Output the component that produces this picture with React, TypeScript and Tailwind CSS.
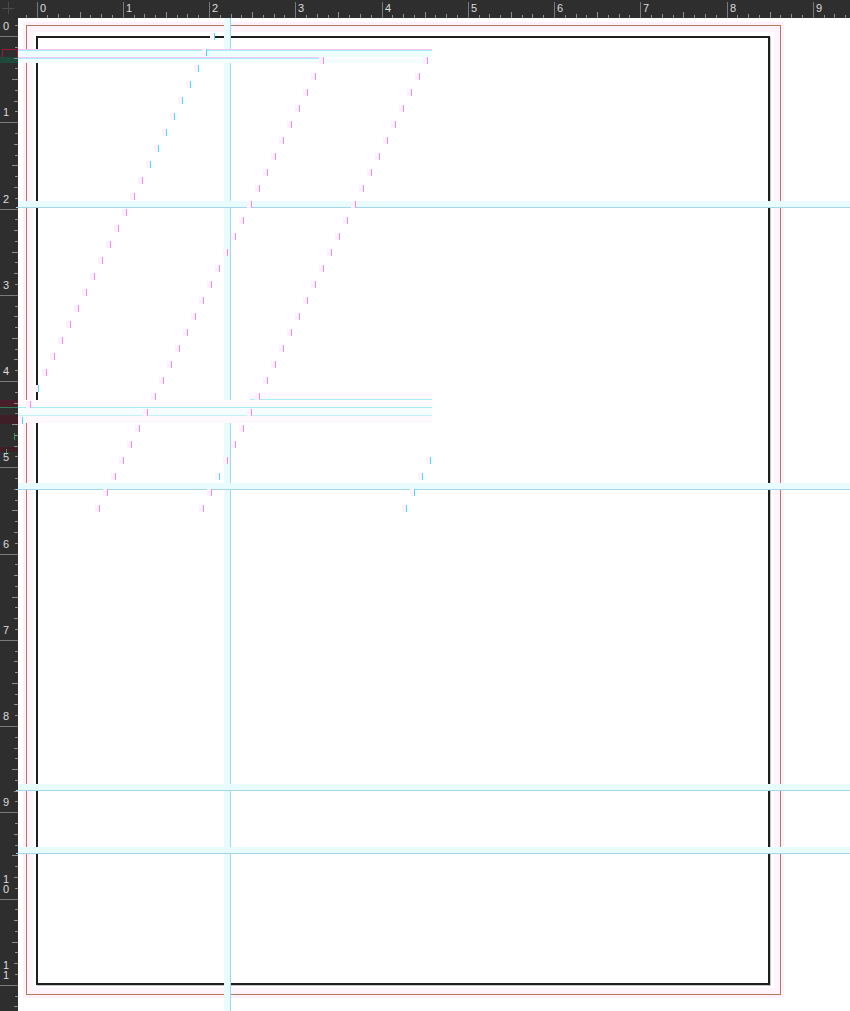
import React from "react";

const PPI = 86.25;

type Dash = { x: number; y: number; cyan?: boolean };

// three diagonal runs of marks + the short fourth one
const dashes: Dash[] = [];
for (let k = 0; k <= 24; k++) {
    dashes.push({ x: 214 - 8 * k, y: 36 + 16 * k, cyan: k <= 8 || k === 22 || k === 24 });
}
for (let k = 0; k <= 28; k++) {
    dashes.push({ x: 323 - 8 * k, y: 60 + 16 * k });
    dashes.push({ x: 427 - 8 * k, y: 60 + 16 * k, cyan: k === 26 });
}
for (let k = 25; k <= 28; k++) {
    dashes.push({ x: 630 - 8 * k, y: 60 + 16 * k, cyan: true });
}

const TopRuler = () => {
    const ticks: React.ReactNode[] = [];
    for (let i = -2; i < 80; i++) {
        const x = Math.round(18.5 + (i * PPI) / 8) + 0.5;
        if (x < 0 || x > 832) continue;
        const m = ((i % 8) + 8) % 8;
        const len = m === 0 ? 16 : m === 4 ? 6 : m % 2 === 0 ? 4 : 3;
        ticks.push(<line key={i} x1={x} x2={x} y1={18 - len} y2={18} stroke={m === 0 ? "#7a7a7a" : "#8f8f8f"} strokeWidth={1} />);
    }
    const labels = Array.from({ length: 10 }, (_, n) => (
        <text key={n} x={Math.round(18.5 + n * PPI) + 3} y={12} fontSize={11} fill="#dcdcdc" fontFamily="Liberation Sans, Arial, sans-serif">
            {n}
        </text>
    ));
    return (
        <svg width={832} height={18} className="block">
            {ticks}
            {labels}
        </svg>
    );
};

const LeftRuler = () => {
    const ticks: React.ReactNode[] = [];
    for (let i = -2; i < 100; i++) {
        const y = Math.round(18 + (i * PPI) / 8) + 0.5;
        if (y < 0 || y > 993) continue;
        const m = ((i % 8) + 8) % 8;
        const len = m === 0 ? 18 : m === 4 ? 6 : m % 2 === 0 ? 4 : 3;
        ticks.push(<line key={i} y1={y} y2={y} x1={18 - len} x2={18} stroke={m === 0 ? "#7a7a7a" : "#8f8f8f"} strokeWidth={1} />);
    }
    const labels = Array.from({ length: 12 }, (_, n) => {
        const base = Math.round(18 + n * PPI);
        if (n < 10) {
            return (
                <text key={n} x={3} y={base - 6} fontSize={11} fill="#dcdcdc" fontFamily="Liberation Sans, Arial, sans-serif">
                    {n}
                </text>
            );
        }
        // two-digit labels run down the ruler
        return (
            <text
                key={n}
                x={6}
                y={base - 26}
                fontSize={11}
                fill="#dcdcdc"
                fontFamily="Liberation Sans, Arial, sans-serif"
                letterSpacing={-2}
                style={{ writingMode: "vertical-lr", textOrientation: "upright" }}
            >
                {n}
            </text>
        );
    });
    return (
        <svg width={18} height={993} className="block">
            {/* selection markers */}
            <rect x={2.5} y={31.5} width={15} height={8} fill="none" stroke="#a3173c" />
            <rect x={0} y={39} width={18} height={6} fill="#1d4a3b" />
            <rect x={0} y={382} width={18} height={7} fill="#4a1d2a" />
            <line x1={0} x2={18} y1={389.5} y2={389.5} stroke="#2e7d5a" />
            <rect x={0} y={397} width={18} height={9} fill="#3f1e27" />
            <line x1={14.5} x2={14.5} y1={415} y2={422} stroke="#2e9a63" />
            <rect x={0} y={429} width={18} height={5} fill="#3f1e27" />
            <line x1={6.5} x2={6.5} y1={431} y2={437} stroke="#2e9a63" />
            {ticks}
            {labels}
        </svg>
    );
};

const HGuide = ({ y }: { y: number }) => (
    <div className="absolute left-[16px] right-0 flex flex-col" style={{ top: y - 6 }}>
        <div className="h-[6px] ml-[2px] bg-[#e8fbfd]" />
        <div className="h-px bg-[#a5d6ec]" />
    </div>
);

export default function App() {
    return (
        <div className="relative w-[850px] h-[1011px] overflow-hidden flex flex-col bg-white font-['Liberation_Sans',Arial,sans-serif]">
            {/* ruler strip */}
            <div className="flex h-[18px] bg-[#2e2e2e]">
                <div className="relative w-[18px] h-[18px]">
                    <div className="absolute left-[8px] top-[2px] w-px h-[12px] bg-[#4a4a4a]" />
                    <div className="absolute left-[2px] top-[8px] w-[12px] h-px bg-[#4a4a4a]" />
                </div>
                <TopRuler />
            </div>

            <div className="flex flex-1">
                <div className="w-[18px] bg-[#2e2e2e]">
                    <LeftRuler />
                </div>

                {/* pasteboard */}
                <div className="flex-1 bg-white pl-[8px] pt-[7px]">
                    <div className="w-[755px] h-[970px] border border-[#b47a5c] pl-[9px] pt-[10px] shadow-[0_0_0_3px_#fdf2fb,inset_0_0_0_6px_#fff3fc]">
                        <div className="w-[734px] h-[949px] border-2 border-[#1e1e1e] bg-white shadow-[1px_1px_0_#c4c4c4]" />
                    </div>
                </div>
            </div>

            {/* guides */}
            <div className="absolute top-[18px] bottom-0 left-[224px] flex">
                <div className="w-[6px] bg-[#e8fbfd]" />
                <div className="w-px bg-[#a5d6ec]" />
            </div>
            <HGuide y={207} />
            <HGuide y={489} />
            <HGuide y={790} />
            <HGuide y={853} />

            {/* frame edges near top */}
            <div className="absolute left-[18px] top-[49px] w-[414px] flex flex-col">
                <div className="h-px bg-[#f8c6f1]" />
                <div className="h-px bg-[#a4eef6]" />
                <div className="h-[6px] bg-[#eefdfe]" />
                <div className="h-px w-[304px] bg-[#f8c6f1]" />
                <div className="h-px w-[304px] bg-[#a4eef6]" />
                <div className="h-[4px] bg-[#f3fdfe]" />
            </div>

            {/* frame edges mid */}
            <div className="absolute left-[18px] top-[392px] w-[414px] flex flex-col">
                <div className="h-[7px] ml-[230px] bg-[#fff8fe]" />
                <div className="h-px ml-[232px] bg-[#a4eef6]" />
                <div className="h-[7px] bg-[#fffafe]" />
                <div className="h-px bg-[#a4eef6]" />
                <div className="h-[7px] bg-[#f6fdfe]" />
                <div className="h-px bg-[#c2f3f9]" />
                <div className="h-[7px] bg-[#fff9fe]" />
            </div>

            {/* diagonal marks */}
            {dashes.map((d, i) => (
                <div key={i} className="absolute flex h-[7px]" style={{ left: d.x - 4, top: d.y - 3 }}>
                    <div className={d.cyan ? "w-[4px] h-full bg-[#fdf3fd]" : "w-[4px] h-full bg-[#fdf2fc]"} />
                    <div className={d.cyan ? "w-px h-full bg-[#46dfeb]" : "w-px h-full bg-[#f28ce6]"} />
                </div>
            ))}
        </div>
    );
}
